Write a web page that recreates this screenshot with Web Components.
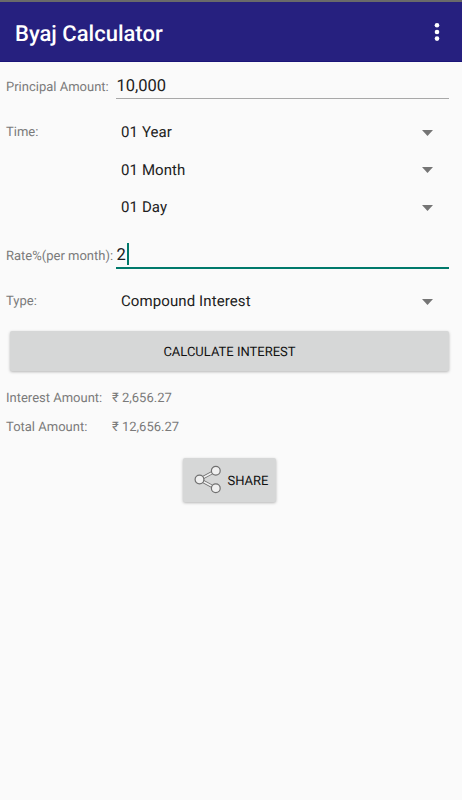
<!DOCTYPE html>
<html>
<head>
<meta charset="utf-8">
<title>Byaj Calculator</title>
<style>
html,body{margin:0;padding:0;height:100%;background:#fafafa;}
body{font-family:Roboto,"Noto Sans",sans-serif;overflow:hidden;text-rendering:geometricPrecision;}
</style>
</head>
<body>
<byaj-app></byaj-app>
<script>
class AppBar extends HTMLElement{
    constructor(){
        super();
        this.attachShadow({mode:"open"});
        this.shadowRoot.innerHTML = `
<style>
:host{display:flex;align-items:center;justify-content:space-between;box-sizing:border-box;height:62px;padding:6px 21px 0 15px;background:#26207f;border-top:2px solid #6a6a6a;border-bottom:1px solid #1a1478;color:#fff;}
h1{margin:0;font:500 22px/1 Roboto,sans-serif;}
svg{display:block;margin-bottom:5px;}
</style>
<h1><slot></slot></h1>
<svg width="8" height="20" viewBox="0 0 8 20" fill="#fff"><circle cx="4" cy="3.3" r="2.3"/><circle cx="4" cy="10" r="2.3"/><circle cx="4" cy="16.6" r="2.3"/></svg>`;
    }
}
customElements.define("app-bar",AppBar);

class FormRow extends HTMLElement{
    constructor(){
        super();
        this.attachShadow({mode:"open"});
        this.shadowRoot.innerHTML = `
<style>
:host{display:grid;grid-template-columns:110px 1fr;align-items:center;padding:0 13px 0 6px;color:#7a7a7a;font:13px/13px Roboto,sans-serif;}
:host([field]){align-items:end;}
:host([field]) .label{padding-bottom:var(--label-bottom,5px);}
</style>
<div class="label"><slot name="label"></slot></div>
<div><slot></slot></div>`;
    }
}
customElements.define("form-row",FormRow);

class TextField extends HTMLElement{
    constructor(){
        super();
        this.attachShadow({mode:"open"});
        this.shadowRoot.innerHTML = `
<style>
:host{display:flex;align-items:flex-end;box-sizing:border-box;height:38px;padding:0 .5px;font:16.5px/22px Roboto,sans-serif;color:#212121;border-bottom:1.5px solid #a8a8a8;}
:host([focused]){border-bottom:2.5px solid #00796b;}
span{display:block;width:2px;height:22px;margin:0 0 2px 1px;background:#00796b;}
</style>
<slot></slot><span id="caret"></span>`;
        if(!this.hasAttribute("focused")) this.shadowRoot.querySelector("#caret").remove();
    }
}
customElements.define("text-field",TextField);

class DropSelect extends HTMLElement{
    constructor(){
        super();
        this.attachShadow({mode:"open"});
        this.shadowRoot.innerHTML = `
<style>
:host{display:flex;align-items:center;justify-content:space-between;height:37.5px;padding:0 16px 0 5px;font:15px/1 Roboto,sans-serif;letter-spacing:.1px;color:#212121;}
svg{display:block;}
</style>
<span><slot></slot></span>
<svg width="11" height="6" viewBox="0 0 11 6"><path d="M0 0h11L5.5 6z" fill="#757575"/></svg>`;
    }
}
customElements.define("drop-select",DropSelect);

class RaisedButton extends HTMLElement{
    constructor(){
        super();
        this.attachShadow({mode:"open"});
        this.shadowRoot.innerHTML = `
<style>
:host{display:flex;align-items:center;justify-content:center;gap:7px;background:#d6d7d7;border-radius:2px;box-shadow:0 1px 3px rgba(0,0,0,.28);color:#111;font:400 13px/1 Roboto,sans-serif;}
.text{padding-top:2px;}
</style>
<slot name="icon"></slot><span class="text"><slot></slot></span>`;
    }
}
customElements.define("raised-button",RaisedButton);

class ResultLine extends HTMLElement{
    constructor(){
        super();
        this.attachShadow({mode:"open"});
        this.shadowRoot.innerHTML = `
<style>
:host{display:grid;grid-template-columns:106px 1fr;align-items:center;height:29px;padding-left:6px;color:#7a7a7a;font:13px/1 Roboto,sans-serif;}
</style>
<div><slot name="label"></slot></div>
<div><slot></slot></div>`;
    }
}
customElements.define("result-line",ResultLine);

class ByajApp extends HTMLElement{
    constructor(){
        super();
        this.attachShadow({mode:"open"});
        this.shadowRoot.innerHTML = `
<style>
:host{display:block;min-height:800px;background:#fafafa;}
.form{display:flex;flex-direction:column;}
.calc{height:40px;margin:10.75px 13px 12.5px 10px;}
.share{width:93px;height:44px;margin:16.5px 0 0 183px;}
.share svg{display:block;}
.first{margin-top:-1px;}
.time{margin-top:15px;}
.rate{margin-top:4.5px;--label-bottom:6.5px;}
.type{margin-top:13.75px;}
</style>
<app-bar>Byaj Calculator</app-bar>
<div class="form">
  <form-row field class="first"><span slot="label">Principal Amount:</span><text-field>10,000</text-field></form-row>
  <form-row class="time"><span slot="label">Time:</span><drop-select>01 Year</drop-select></form-row>
  <form-row><span></span><drop-select>01 Month</drop-select></form-row>
  <form-row><span></span><drop-select>01 Day</drop-select></form-row>
  <form-row field class="rate"><span slot="label">Rate%(per month):</span><text-field focused>2</text-field></form-row>
  <form-row class="type"><span slot="label">Type:</span><drop-select>Compound Interest</drop-select></form-row>
  <raised-button class="calc">CALCULATE INTEREST</raised-button>
  <result-line><span slot="label">Interest Amount:</span>₹ 2,656.27</result-line>
  <result-line><span slot="label">Total Amount:</span>₹ 12,656.27</result-line>
  <raised-button class="share">
    <svg slot="icon" width="30" height="30" viewBox="0 0 30 30" fill="#f0f0f0" stroke="#707070" stroke-width="1.2">
      <path d="M8.5 14.5L24.8 5.7M8.5 14.5l16.3 8.8" fill="none" stroke-width="3.2"/>
      <path d="M8.5 14.5L24.8 5.7M8.5 14.5l16.3 8.8" fill="none" stroke="#f0f0f0" stroke-width="1.6"/>
      <circle cx="8.5" cy="14.5" r="4.4"/><circle cx="24.8" cy="5.7" r="4.4"/><circle cx="24.8" cy="23.3" r="4.4"/>
    </svg>SHARE</raised-button>
</div>`;
    }
}
customElements.define("byaj-app",ByajApp);
</script>
</body>
</html>
